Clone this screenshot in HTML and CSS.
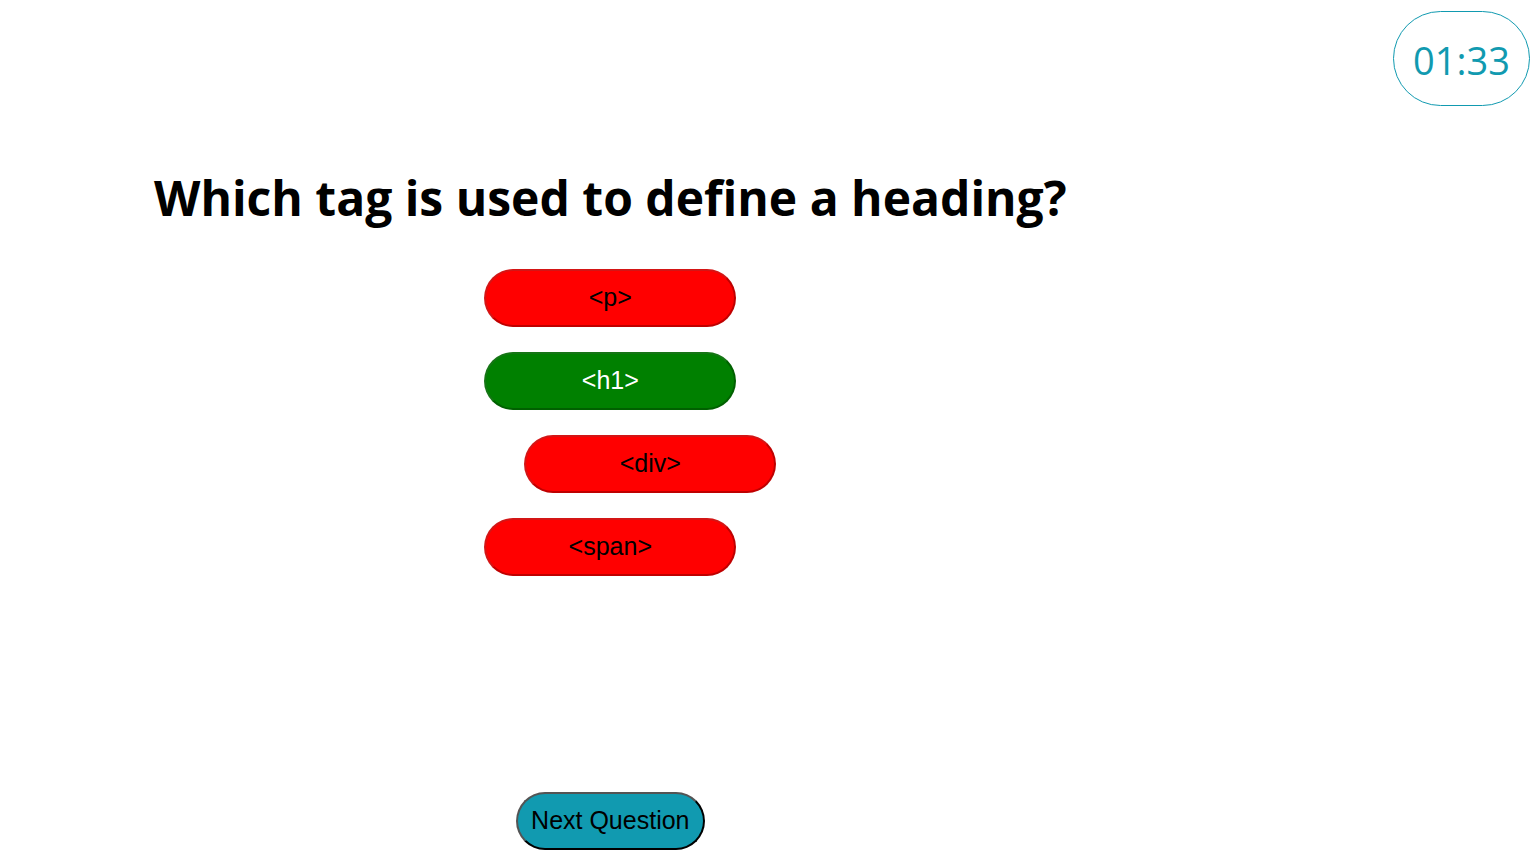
FILE: index.html
```
<!DOCTYPE html>
<html lang="en">
<head>
<meta charset="utf-8">
<title>Quiz</title>
<link rel="stylesheet" href="styles.css">
</head>
<body>
<header class="topbar"><div class="timer" role="timer">01:33</div></header>
<main class="quiz">
<h1 class="question">Which tag is used to define a heading?</h1>
<div class="options">
<button type="button" class="option wrong">&lt;p&gt;</button>
<button type="button" class="option correct">&lt;h1&gt;</button>
<button type="button" class="option wrong selected">&lt;div&gt;</button>
<button type="button" class="option wrong">&lt;span&gt;</button>
</div>
<button type="button" class="next">Next Question</button>
</main>
</body>
</html>
```
FILE: styles.css
```
* {
  box-sizing: border-box;
}

body {
  margin: 0;
  min-height: 100vh;
  display: flex;
  flex-direction: column;
  background: #fff;
  font-family: "Segoe UI", "Open Sans", "Noto Sans", sans-serif;
}

.topbar {
  display: flex;
  justify-content: flex-end;
  padding: 11px 6px 0;
}

.timer {
  padding: 22px 19px 18px;
  border: 1px solid #119ab0;
  border-radius: 50px;
  color: #119ab0;
  font-size: 38px;
  line-height: 53px;
}

.quiz {
  flex: 1;
  align-self: flex-start;
  display: flex;
  flex-direction: column;
  align-items: center;
  margin-left: 154px;
  padding: 60px 0 10px;
}

.question {
  margin: 0;
  font-size: 48px;
  font-weight: 700;
  line-height: 64px;
}

.options {
  display: flex;
  flex-direction: column;
  gap: 25px;
  margin-top: 39px;
}

.option,
.next {
  height: 58px;
  padding: 0 13px 2px;
  border: 2px outset #000;
  border-radius: 30px;
  font-family: "Liberation Sans", Arial, sans-serif;
  font-size: 25px;
  color: #000;
}

.option {
  width: 252px;
  border-color: rgba(0, 0, 0, 0.25);
}

.wrong {
  background-color: red;
}

.correct {
  background-color: green;
  color: #fff;
}

.selected {
  margin-left: 40px;
  margin-right: -40px;
}

.next {
  margin-top: auto;
  background: #119ab0;
}
```
